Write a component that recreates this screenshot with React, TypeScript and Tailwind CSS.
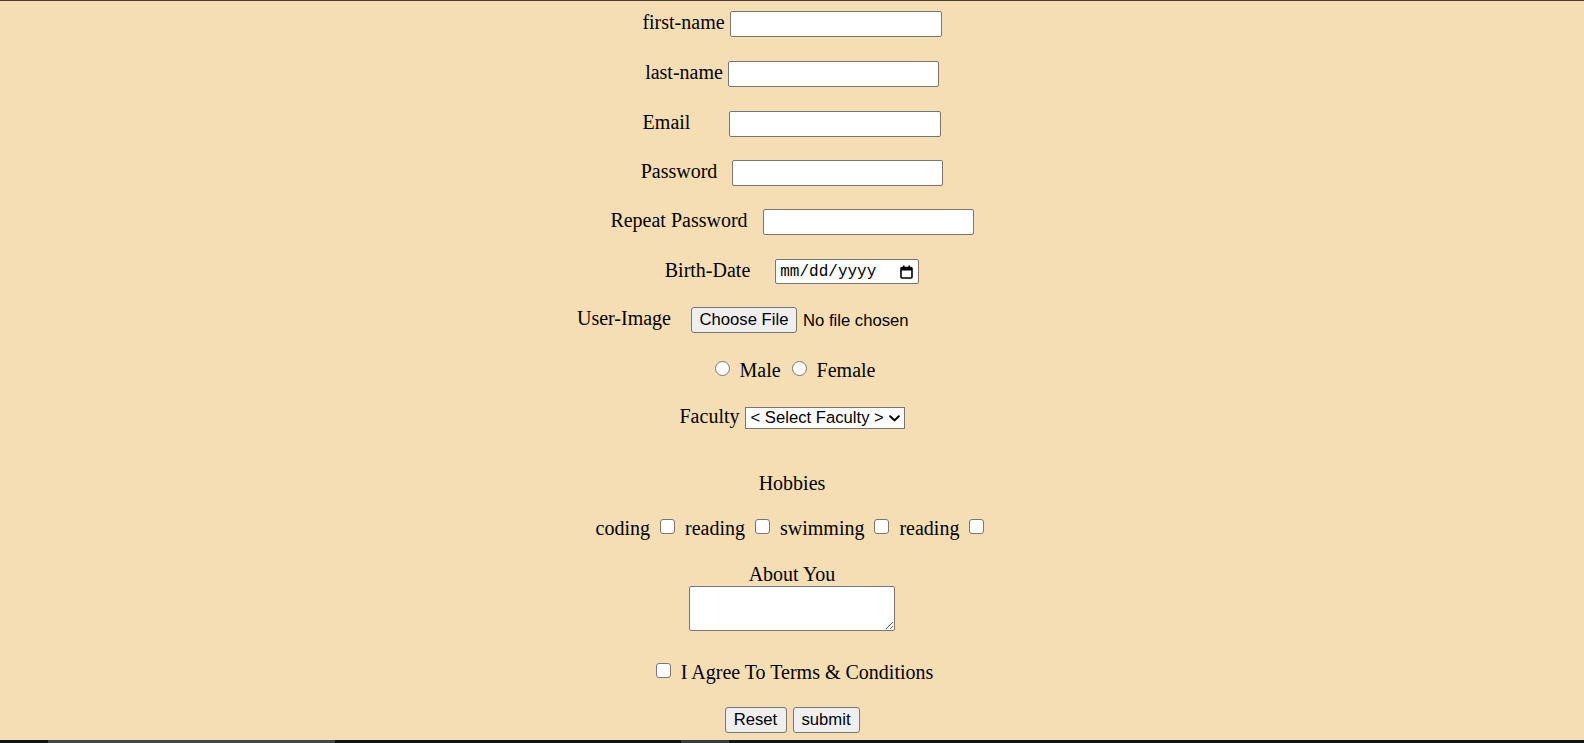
import React from "react";

const box = "border border-[#767676] bg-white rounded-[2px]";
const ctl = "font-['Liberation_Sans',Arial,sans-serif] text-[16.67px] text-black";
const btn = `h-[26px] border border-[#767676] bg-[#efefef] rounded-[3px] ${ctl} leading-none flex items-center justify-center`;
const check = "appearance-none w-[15px] h-[15px] border border-[#767676] bg-white rounded-[3px] shrink-0";
const radio = "appearance-none w-[15px] h-[15px] border border-[#767676] bg-white rounded-full shrink-0";

function Label({ children }: { children: React.ReactNode }) {
  return <span className="leading-[23px] pb-[3px] whitespace-nowrap">{children}</span>;
}

function CalendarIcon() {
  return (
    <svg width="13" height="14" viewBox="0 0 13 14" fill="none">
      <rect x="1" y="2.5" width="11" height="10.5" rx="1" stroke="#000" strokeWidth="1.6" />
      <rect x="1" y="2.5" width="11" height="3" fill="#000" />
      <rect x="3" y="0.5" width="1.6" height="3" fill="#000" />
      <rect x="8.4" y="0.5" width="1.6" height="3" fill="#000" />
    </svg>
  );
}

function Chevron() {
  return (
    <svg width="11" height="7" viewBox="0 0 11 7" fill="none">
      <path d="M1.2 1.2 L5.5 5.4 L9.8 1.2" stroke="#000" strokeWidth="2" strokeLinecap="round" strokeLinejoin="round" />
    </svg>
  );
}

export default function App() {
  return (
    <div className="h-[743px] overflow-hidden bg-[#f5deb3] border-t border-[#4a3f30] flex flex-col items-center font-['Liberation_Serif','Times_New_Roman',serif] text-[20px] text-black">
      {/* text fields */}
      <div className="mt-[10px] h-[26px] flex items-center">
        <Label>first-name</Label>
        <input className={`ml-[5px] w-[212px] h-[26px] ${box}`} />
      </div>
      <div className="mt-[24px] h-[26px] flex items-center">
        <Label>last-name</Label>
        <input className={`ml-[5px] w-[211px] h-[26px] ${box}`} />
      </div>
      <div className="mt-[24px] h-[26px] flex items-center">
        <Label>Email</Label>
        <input className={`ml-[39px] w-[212px] h-[26px] ${box}`} />
      </div>
      <div className="mt-[23px] h-[26px] flex items-center">
        <Label>Password</Label>
        <input type="password" className={`ml-[15px] w-[211px] h-[26px] ${box}`} />
      </div>
      <div className="mt-[23px] h-[26px] flex items-center">
        <Label>Repeat Password</Label>
        <input type="password" className={`ml-[15px] w-[211px] h-[26px] ${box}`} />
      </div>

      {/* birth date */}
      <div className="mt-[24px] h-[25px] flex items-center">
        <Label>Birth-Date</Label>
        <div className={`ml-[25px] w-[144px] h-[25px] ${box} flex items-center pl-[4px] pr-[5px]`}>
          <span className="font-['Liberation_Mono','DejaVu_Sans_Mono',monospace] text-[16px] leading-none">mm/dd/yyyy</span>
          <span className="ml-auto flex"><CalendarIcon /></span>
        </div>
      </div>

      {/* user image */}
      <div className="mt-[23px] h-[26px] flex items-center">
        <Label>User-Image</Label>
        <div className="ml-[20px] w-[316px] flex items-center">
          <button className={`${btn} w-[106px]`}>Choose File</button>
          <span className={`ml-[6px] ${ctl}`}>No file chosen</span>
        </div>
      </div>

      {/* gender */}
      <div className="mt-[26px] h-[23px] flex items-start leading-[23px]">
        <input type="radio" name="g" className={`${radio} mt-[2px] ml-[6px]`} />
        <span className="ml-[10px]">Male</span>
        <input type="radio" name="g" className={`${radio} mt-[2px] ml-[11px]`} />
        <span className="ml-[10px]">Female</span>
      </div>

      {/* faculty */}
      <div className="mt-[25px] h-[22px] flex items-center">
        <Label>Faculty</Label>
        <div className={`ml-[5px] w-[160px] h-[22px] border border-[#767676] bg-white flex items-center pl-[5px] pr-[4px] ${ctl}`}>
          <span className="leading-none">&lt; Select Faculty &gt;</span>
          <span className="ml-auto flex"><Chevron /></span>
        </div>
      </div>

      {/* hobbies */}
      <div className="mt-[43px] leading-[23px]">Hobbies</div>
      <div className="mt-[22px] h-[23px] flex items-start leading-[23px]">
        <span>coding</span>
        <input type="checkbox" className={`${check} mt-[2px] ml-[10px]`} />
        <span className="ml-[10px]">reading</span>
        <input type="checkbox" className={`${check} mt-[2px] ml-[10px]`} />
        <span className="ml-[10px]">swimming</span>
        <input type="checkbox" className={`${check} mt-[2px] ml-[10px]`} />
        <span className="ml-[10px]">reading</span>
        <input type="checkbox" className={`${check} mt-[2px] ml-[10px] mr-[4px]`} />
      </div>

      {/* about */}
      <div className="mt-[23px] leading-[23px]">About You</div>
      <textarea className={`mt-0 w-[206px] h-[45px] ${box} resize`} />

      {/* terms */}
      <div className="mt-[30px] h-[23px] flex items-start leading-[23px]">
        <input type="checkbox" className={`${check} mt-[2px] ml-[5px]`} />
        <span className="ml-[10px]">I Agree To Terms &amp; Conditions</span>
      </div>

      {/* actions */}
      <div className="mt-[23px] flex items-center gap-[6px]">
        <button className={`${btn} w-[62px]`}>Reset</button>
        <button className={`${btn} w-[67px]`}>submit</button>
      </div>

      <div className="mt-auto self-stretch h-[3px] bg-[#141414] flex">
        <div className="w-[48px]" />
        <div className="w-[287px] bg-[#454545]" />
        <div className="w-[346px]" />
        <div className="w-[48px] bg-[#3a3a3a]" />
      </div>
    </div>
  );
}
